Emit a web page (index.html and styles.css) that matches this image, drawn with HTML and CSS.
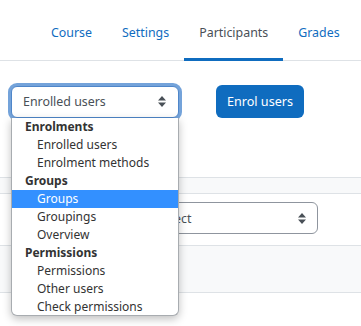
FILE: index.html
```html
<!DOCTYPE html>
<html>
<head>
<meta charset="utf-8">
<link rel="stylesheet" href="styles.css">
</head>
<body>
<nav class="tabs">
  <a class="tab">Course</a>
  <a class="tab">Settings</a>
  <a class="tab active">Participants</a>
  <a class="tab">Grades</a>
</nav>
<div class="toolbar">
  <div class="select focus">
    <span>Enrolled users</span>
    <svg class="arrows" width="8" height="11" viewBox="0 0 8 11"><path d="M4 0 L8 4.5 H0 Z M0 6.5 H8 L4 11 Z" fill="#495057"/></svg>
  </div>
  <button class="btn">Enrol users</button>
</div>
<div class="filters">
  <div class="band"></div>
  <div class="row2">
    <div class="select small">
      <span>Select</span>
      <svg class="arrows" width="8" height="11" viewBox="0 0 8 11"><path d="M4 0 L8 4.5 H0 Z M0 6.5 H8 L4 11 Z" fill="#495057"/></svg>
    </div>
  </div>
  <div class="band tall"></div>
</div>
<ul class="menu">
  <li class="group">Enrolments</li>
  <li class="opt">Enrolled users</li>
  <li class="opt">Enrolment methods</li>
  <li class="group">Groups</li>
  <li class="opt sel">Groups</li>
  <li class="opt">Groupings</li>
  <li class="opt">Overview</li>
  <li class="group">Permissions</li>
  <li class="opt">Permissions</li>
  <li class="opt">Other users</li>
  <li class="opt">Check permissions</li>
</ul>
</body>
</html>
```
FILE: styles.css
```css
* { box-sizing: border-box; }
html, body { margin: 0; background: #fff; }
body {
  font-family: "Noto Sans", "Open Sans", sans-serif;
  color: #1d2125;
  position: relative;
  height: 326px;
  overflow: hidden;
}
.tabs {
  display: flex;
  padding-left: 36px;
  height: 61px;
  border-bottom: 1px solid #dee2e6;
  font-size: 12.4px;
}
.tab {
  display: flex;
  align-items: center;
  padding: 7px 15px 0;
  color: #0f6cbf;
  border-bottom: 3px solid transparent;
  margin-bottom: -1px;
}
.tab.active {
  color: #495057;
  border-bottom-color: #0f6cbf;
}
.toolbar {
  display: flex;
  align-items: center;
  padding: 24px 0 0 11px;
  gap: 37px;
}
.select {
  display: flex;
  align-items: center;
  justify-content: space-between;
  height: 32px;
  border: 1px solid #8f959e;
  border-radius: 6px;
  background: #fff;
  font-size: 12.4px;
  color: #495057;
}
.select.focus {
  width: 168px;
  padding: 0 12px 0 11px;
  border-color: #4f86c9;
  box-shadow: 0 0 0 3px #74a3da;
}
.btn {
  height: 33px;
  width: 88px;
  border: 0;
  border-radius: 6px;
  background: #0f6cbf;
  color: #fff;
  font-family: inherit;
  font-size: 12.6px;
  padding: 0;
}
.filters {
  margin-top: 59px;
}
.band {
  height: 17px;
  background: #f8f9fa;
  border-top: 1px solid #dee2e6;
  border-bottom: 1px solid #dee2e6;
}
.band.tall { height: 48px; }
.row2 {
  padding: 8px 0 11px 146px;
}
.select.small {
  width: 172px;
  padding: 0 11px 0 10px;
  height: 32px;
}
.menu {
  position: absolute;
  left: 11px;
  top: 118px;
  width: 168px;
  height: 198px;
  margin: 0;
  padding: 0;
  list-style: none;
  background: #fff;
  border: 1px solid #a8acb0;
  border-top: 0;
  border-radius: 0 0 6px 6px;
  box-shadow: 0 3px 8px rgba(0,0,0,0.25);
  font-size: 12px;
  color: #333;
}
.menu li {
  height: 18px;
  line-height: 18px;
  white-space: nowrap;
}
.group { padding-left: 13px; font-weight: bold; }
.opt { padding-left: 25px; }
.opt.sel { background: #3390ff; color: #fff; }
.arrows { flex: none; }
```
